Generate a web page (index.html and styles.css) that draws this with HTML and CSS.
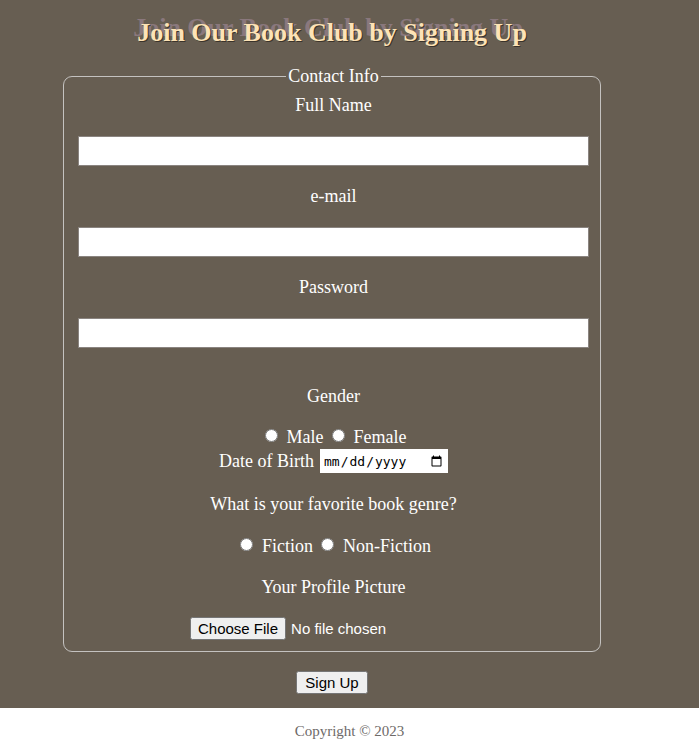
FILE: index.html
```html
<!DOCTYPE html>
<html>
<head>
<meta charset="utf-8">
<link rel="stylesheet" href="styles.css">
</head>
<body>
<main class="main">
  <div class="wrap">
    <h1 class="title">Join Our Book Club by Signing Up</h1>
    <form class="form">
      <fieldset class="box">
        <legend class="legend">Contact Info</legend>
        <label class="lbl" for="fn">Full Name</label>
        <input class="txt" id="fn" type="text">
        <label class="lbl" for="em">e-mail</label>
        <input class="txt" id="em" type="email">
        <label class="lbl" for="pw">Password</label>
        <input class="txt" id="pw" type="password">
        <div class="lbl gender">Gender</div>
        <div class="line radios">
          <input type="radio" name="g" id="m"><label for="m">Male</label>
          <input type="radio" name="g" id="f"><label for="f">Female</label>
        </div>
        <div class="line dob">
          <label for="d">Date of Birth</label>
          <input class="date" id="d" type="date">
        </div>
        <div class="lbl q">What is your favorite book genre?</div>
        <div class="line radios r2">
          <input type="radio" name="b" id="fi"><label for="fi">Fiction</label>
          <input type="radio" name="b" id="nf"><label for="nf">Non-Fiction</label>
        </div>
        <label class="lbl q" for="pp">Your Profile Picture</label>
        <div class="filerow"><input class="file" id="pp" type="file"></div>
      </fieldset>
      <div class="submit"><button class="btn" type="button">Sign Up</button></div>
    </form>
  </div>
</main>
<footer class="foot">Copyright © 2023</footer>
</body>
</html>
```
FILE: styles.css
```css
html, body { margin: 0; padding: 0; }
body {
  background: #fff;
  font-family: "Liberation Serif", "Times New Roman", serif;
  color: #fff;
}
.main {
  background: #675e52;
  padding: 16px 0 14px;
}
.wrap {
  margin-left: 63px;
  width: 538px;
}
.title {
  margin: 0;
  text-align: center;
  font-size: 26px;
  line-height: 34px;
  font-weight: bold;
  color: #fde3b6;
  text-shadow: 1px 1px 0 #3a332b, -4px -5px 0 #8a787d;
}
.form { margin: 0; }
.box {
  margin: 16px 0 0;
  width: 538px;
  box-sizing: border-box;
  border: 1px solid #c4c2c0;
  border-radius: 9px;
  padding: 9px 11px 11px 14px;
  display: flex;
  flex-direction: column;
  align-items: center;
}
.legend {
  margin: 0 auto;
  padding: 0 2px;
  font-size: 18px;
  line-height: 20px;
}
.lbl {
  display: block;
  font-size: 18px;
  line-height: 20px;
  text-align: center;
}
.txt {
  display: block;
  align-self: stretch;
  box-sizing: border-box;
  height: 30px;
  margin: 21px 0 20px;
  border: 1px solid #8a8480;
  background: #fff;
}
.gender { margin-top: 18px; }
.line {
  font-size: 18px;
  display: flex;
  align-items: center;
  justify-content: center;
}
.radios { margin-top: 21px; height: 20px; }
.radios input[type=radio] { margin: 0 9px 3px 6px; width: 13px; height: 13px; }
.radios label { margin-right: 2px; }
.dob { height: 24px; margin-top: 2px; }
.dob label { margin-right: 6px; }
.date {
  font-family: "DejaVu Sans Mono", monospace;
  font-size: 13px;
  width: 128px;
  height: 24px;
  box-sizing: border-box;
  border: 1px solid #fff;
  background: #fff;
  padding: 1px 2px;
}
.q { margin-top: 21px; }
.r2 { margin-top: 22px; margin-bottom: 0; }
.filerow {
  margin-top: 20px;
  align-self: stretch;
  padding-left: 112px;
}
.file {
  font-family: "Liberation Sans", Arial, sans-serif;
  font-size: 15px;
  color: #fff;
}
.file::file-selector-button {
  font-family: "Liberation Sans", Arial, sans-serif;
  font-size: 15px;
  margin-right: 5px;
}
.submit {
  text-align: center;
  margin-top: 19px;
}
.btn {
  font-family: "Liberation Sans", Arial, sans-serif;
  font-size: 15px;
  padding: 1px 7px;
}
.foot {
  text-align: center;
  color: #6e6a68;
  font-size: 15px;
  line-height: 20px;
  padding: 13px 0 5px;
}
```
